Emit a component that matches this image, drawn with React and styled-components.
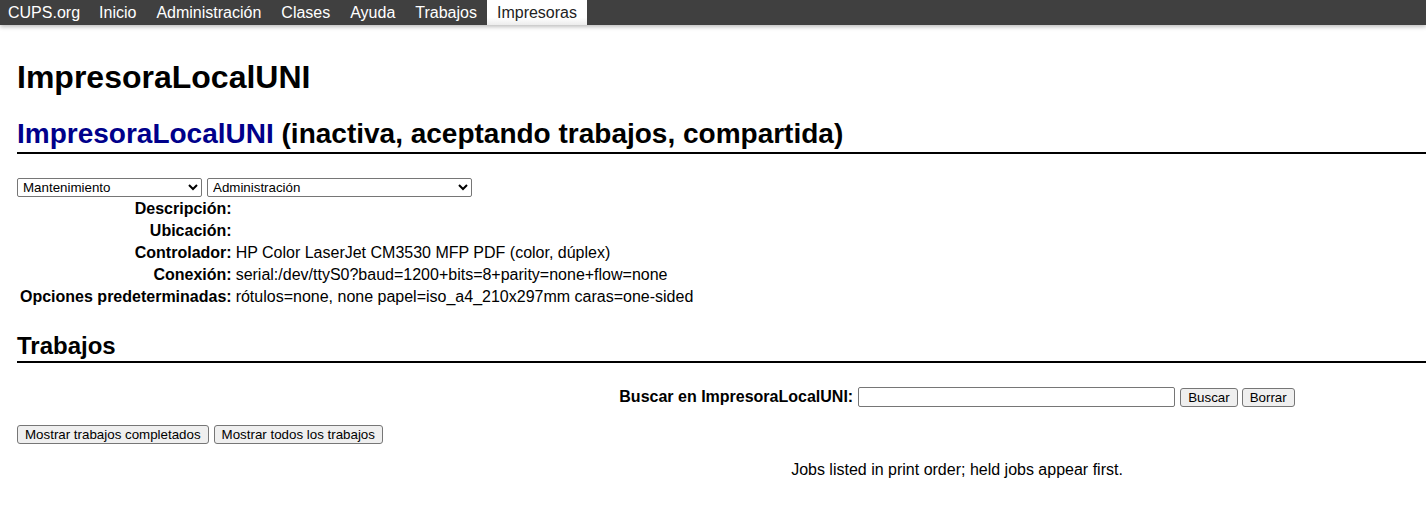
import React from 'react';
import styled, { createGlobalStyle } from 'styled-components';

const GlobalStyle = createGlobalStyle`
html, body {
  margin: 0;
  padding: 0;
  background: #fff;
}
body {
  font-family: "Liberation Sans", Arial, sans-serif;
  font-size: 16px;
  color: #000;
}
`

const navItems = ['CUPS.org', 'Inicio', 'Administración', 'Clases', 'Ayuda', 'Trabajos', 'Impresoras'];

const details = [
    ['Descripción:', ''],
    ['Ubicación:', ''],
    ['Controlador:', 'HP Color LaserJet CM3530 MFP PDF (color, dúplex)'],
    ['Conexión:', 'serial:/dev/ttyS0?baud=1200+bits=8+parity=none+flow=none'],
    ['Opciones predeterminadas:', 'rótulos=none, none papel=iso_a4_210x297mm caras=one-sided'],
];

const CENTRE_SHIFT = 471;

export default class App extends React.Component {
    renderNav = () => {
        return navItems.map(item => (
            <StyledNavItem key={item} active={item === 'Impresoras'}>{item}</StyledNavItem>
        ))
    }

    renderDetails = () => {
        return details.map(([label, value]) => (
            <tr key={label}>
                <StyledLabel>{label}</StyledLabel>
                <StyledValue>{value}</StyledValue>
            </tr>
        ))
    }

    render() {
        return (
            <>
                <GlobalStyle />
                <StyledNav>
                    {this.renderNav()}
                </StyledNav>
                <StyledPage>
                    <StyledH1>ImpresoraLocalUNI</StyledH1>
                    <StyledTitle size={28} lh={32} pb={2} top={23}>
                        <StyledLink>ImpresoraLocalUNI</StyledLink> (inactiva, aceptando trabajos, compartida)
                    </StyledTitle>
                    <StyledSelects>
                        <StyledSelect width={185} defaultValue="m">
                            <option value="m">Mantenimiento</option>
                        </StyledSelect>
                        <StyledSelect width={265} defaultValue="a">
                            <option value="a">Administración</option>
                        </StyledSelect>
                    </StyledSelects>
                    <StyledTable>
                        <tbody>
                            {this.renderDetails()}
                        </tbody>
                    </StyledTable>
                    <StyledTitle size={24} lh={28} pb={1} top={23}>Trabajos</StyledTitle>
                    <StyledSearch shift={CENTRE_SHIFT}>
                        <b>Buscar en ImpresoraLocalUNI:</b>
                        <StyledInput type="search" />
                        <StyledButton>Buscar</StyledButton>
                        <StyledButton>Borrar</StyledButton>
                    </StyledSearch>
                    <StyledButtonRow>
                        <StyledButton>Mostrar trabajos completados</StyledButton>
                        <StyledButton>Mostrar todos los trabajos</StyledButton>
                    </StyledButtonRow>
                    <StyledNote shift={CENTRE_SHIFT}>Jobs listed in print order; held jobs appear first.</StyledNote>
                </StyledPage>
            </>
        )
    }
}

const StyledNav = styled.div`
display: flex;
height: 25px;
background: #404040;
box-shadow: 0 2px 4px rgba(0, 0, 0, 0.25);
`

const StyledNavItem = styled.div`
padding: 0 10px;
line-height: 25px;
font-size: 16px;
color: ${p => p.active ? '#222' : '#fff'};
background: ${p => p.active ? 'linear-gradient(#fff 70%, #ececec)' : 'transparent'};

&:first-child {
  padding-left: 8px;
  padding-right: 9px;
}
`

const StyledPage = styled.div`
padding-left: 17px;
`

const StyledH1 = styled.h1`
margin: 34px 0 0;
font-size: 32px;
line-height: 36px;
font-weight: bold;
`

const StyledTitle = styled.h2`
margin: ${p => p.top}px 0 0;
font-size: ${p => p.size}px;
line-height: ${p => p.lh}px;
padding-bottom: ${p => p.pb}px;
border-bottom: 2px solid #000;
font-weight: bold;
`

const StyledLink = styled.span`
color: #00008b;
`

const StyledSelects = styled.div`
display: flex;
gap: 5px;
margin-top: 24px;
`

const StyledSelect = styled.select`
width: ${p => p.width}px;
height: 19px;
font-family: "Liberation Sans", Arial, sans-serif;
font-size: 13.33px;
border: 1px solid #767676;
border-radius: 2px;
background: #fff;
color: #000;
padding: 0 0 0 1px;
`

const StyledTable = styled.table`
border-spacing: 2px;
font-size: 16px;
`

const StyledLabel = styled.td`
padding: 1px;
line-height: 18px;
text-align: right;
font-weight: bold;
white-space: nowrap;
`

const StyledValue = styled.td`
padding: 1px;
line-height: 18px;
white-space: nowrap;
`

const StyledSearch = styled.div`
display: flex;
justify-content: center;
align-items: center;
gap: 5px;
margin-top: 24px;
padding-left: ${p => p.shift}px;
height: 20px;
font-size: 16px;

& > button:last-child {
  margin-left: -1px;
}
`

const StyledInput = styled.input`
box-sizing: border-box;
width: 317px;
height: 20px;
border: 1px solid #767676;
border-radius: 2px;
padding: 0 2px;
`

const StyledButton = styled.button`
height: 19px;
padding: 0 7px;
font-family: "Liberation Sans", Arial, sans-serif;
font-size: 13.33px;
line-height: 17px;
color: #000;
background: #efefef;
border: 1px solid #767676;
border-radius: 3px;
`

const StyledButtonRow = styled.div`
display: flex;
gap: 5px;
margin-top: 18px;
`

const StyledNote = styled.p`
margin: 17px 0 0;
padding-left: ${p => p.shift}px;
line-height: 18px;
text-align: center;
`
